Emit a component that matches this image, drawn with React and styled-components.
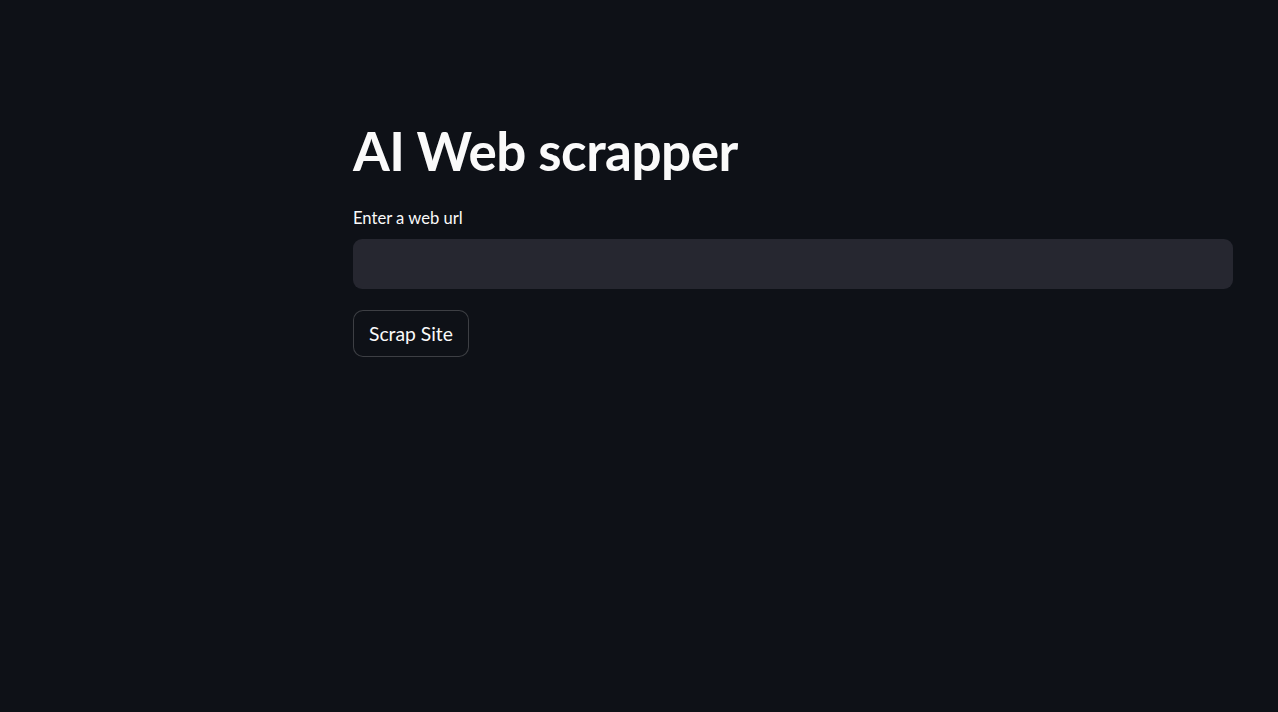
import React, { useState } from "react";
import styled, { createGlobalStyle } from "styled-components";

const GlobalStyle = createGlobalStyle`
  html, body {
    margin: 0;
    padding: 0;
    background: #0e1117;
  }
  body {
    font-family: "Lato", "Noto Sans", sans-serif;
    color: #fafafa;
  }
`;

const Page = styled.div`
  min-height: 712px;
  box-sizing: border-box;
  padding: 119px 45px 0 353px;
`;

const Title = styled.h1`
  margin: 0;
  font-size: 53px;
  font-weight: 700;
  line-height: 1.2;
  letter-spacing: -0.5px;
  color: #fafafa;
`;

const Field = styled.div`
  display: flex;
  flex-direction: column;
  gap: 10px;
  margin-top: 26px;
`;

const Label = styled.label`
  font-size: 16.6px;
  line-height: 1.2;
  color: #fafafa;
`;

const Input = styled.input`
  box-sizing: border-box;
  width: 100%;
  height: 50px;
  border: none;
  border-radius: 9px;
  background: #262730;
  color: #fafafa;
  padding: 0 16px;
  font-family: inherit;
  font-size: 19px;
  outline: none;
`;

const Button = styled.button`
  margin-top: 21px;
  box-sizing: border-box;
  width: fit-content;
  height: 47px;
  padding: 0 15px;
  border: 1px solid rgba(250, 250, 250, 0.2);
  border-radius: 10px;
  background: #0e1117;
  color: #fafafa;
  font-family: inherit;
  font-size: 19.3px;
  cursor: pointer;
`;

export default function App() {
  const [url, setUrl] = useState("");

  return (
    <>
      <GlobalStyle />
      <Page>
        <Title>AI Web scrapper</Title>
        <Field>
          <Label htmlFor="url">Enter a web url</Label>
          <Input id="url" value={url} onChange={(e) => setUrl(e.target.value)} />
        </Field>
        <Button>Scrap Site</Button>
      </Page>
    </>
  );
}
